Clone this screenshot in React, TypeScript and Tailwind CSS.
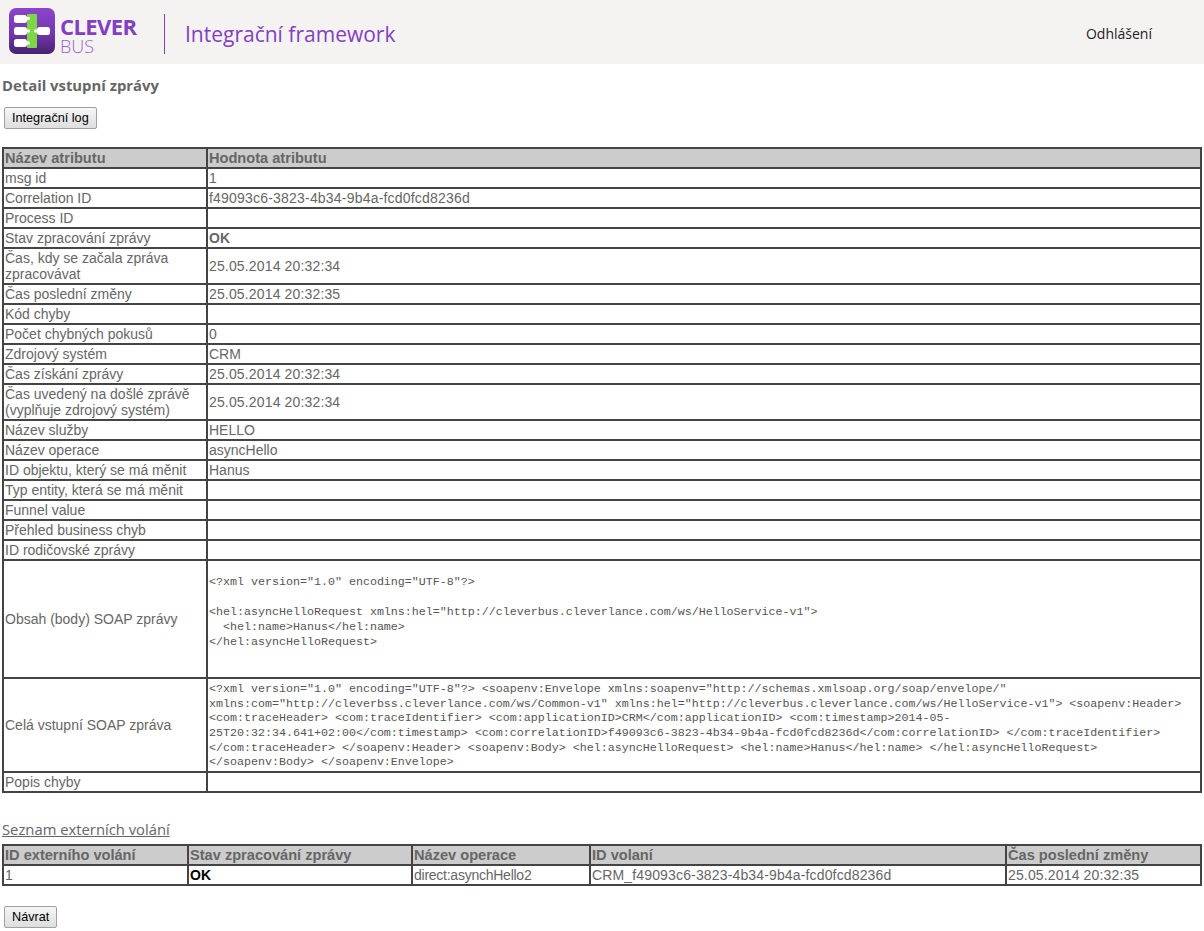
const rows: [string, React.ReactNode][] = [
  ["msg id", "1"],
  ["Correlation ID", <span className="tracking-[0.2px]">f49093c6-3823-4b34-9b4a-fcd0fcd8236d</span>],
  ["Process ID", ""],
  ["Stav zpracování zprávy", <strong className="font-bold">OK</strong>],
  ["Čas, kdy se začala zpráva zpracovávat", <span className="tracking-[0.15px]">25.05.2014 20:32:34</span>],
  ["Čas poslední změny", <span className="tracking-[0.15px]">25.05.2014 20:32:35</span>],
  ["Kód chyby", ""],
  ["Počet chybných pokusů", "0"],
  ["Zdrojový systém", "CRM"],
  ["Čas získání zprávy", <span className="tracking-[0.15px]">25.05.2014 20:32:34</span>],
  ["Čas uvedený na došlé zprávě (vyplňuje zdrojový systém)", <span className="tracking-[0.15px]">25.05.2014 20:32:34</span>],
  ["Název služby", "HELLO"],
  ["Název operace", "asyncHello"],
  ["ID objektu, který se má měnit", "Hanus"],
  ["Typ entity, která se má měnit", ""],
  ["Funnel value", ""],
  ["Přehled business chyb", ""],
  ["ID rodičovské zprávy", ""],
];

const bodyXml = `<?xml version="1.0" encoding="UTF-8"?>

<hel:asyncHelloRequest xmlns:hel="http://cleverbus.cleverlance.com/ws/HelloService-v1">
  <hel:name>Hanus</hel:name>
</hel:asyncHelloRequest>
`;

const fullXml = `<?xml version="1.0" encoding="UTF-8"?> <soapenv:Envelope xmlns:soapenv="http://schemas.xmlsoap.org/soap/envelope/" xmlns:com="http://cleverbss.cleverlance.com/ws/Common-v1" xmlns:hel="http://cleverbus.cleverlance.com/ws/HelloService-v1"> <soapenv:Header> <com:traceHeader> <com:traceIdentifier> <com:applicationID>CRM</com:applicationID> <com:timestamp>2014-05-25T20:32:34.641+02:00</com:timestamp> <com:correlationID>f49093c6-3823-4b34-9b4a-fcd0fcd8236d</com:correlationID> </com:traceIdentifier> </com:traceHeader> </soapenv:Header> <soapenv:Body> <hel:asyncHelloRequest> <hel:name>Hanus</hel:name> </hel:asyncHelloRequest> </soapenv:Body> </soapenv:Envelope>`;

const td = "border-2 border-[#444] px-px py-px align-middle leading-[16px]";
const th = "border-2 border-[#444] bg-[#cccccc] px-px py-px text-left text-[14.6px] font-bold leading-[16px] text-[#666]";
const mono = "font-['Liberation_Mono',monospace] text-[11.67px] text-[#555]";

function Logo() {
  return (
    <svg width="46" height="46" viewBox="0 0 46 46" className="mb-[2px]">
      <defs>
        <linearGradient id="logoBg" x1="0" y1="0" x2="0" y2="1">
          <stop offset="0" stopColor="#8b45cc" />
          <stop offset="0.55" stopColor="#7437ae" />
          <stop offset="1" stopColor="#482270" />
        </linearGradient>
      </defs>
      <rect width="46" height="46" rx="7" fill="url(#logoBg)" />
      <rect x="18" y="6" width="10" height="34" rx="1" fill="#7dd646" />
      <rect x="5" y="7" width="13" height="8" rx="2.5" fill="#fff" />
      <rect x="5" y="19" width="13" height="8" rx="2.5" fill="#fff" />
      <rect x="5" y="31" width="13" height="8" rx="2.5" fill="#fff" />
      <rect x="16" y="9" width="5" height="3" rx="1" fill="#fff" />
      <rect x="16" y="21.5" width="5" height="3" rx="1" fill="#fff" />
      <rect x="16" y="33.5" width="5" height="3" rx="1" fill="#fff" />
      <rect x="28" y="19" width="13" height="8" rx="2.5" fill="#fff" />
      <rect x="25" y="21.5" width="5" height="3" rx="1" fill="#fff" />
    </svg>
  );
}

function PageButton({ label }: { label: string }) {
  return (
    <button className="block h-[22px] rounded-[2px] border border-[#a0a0a0] bg-gradient-to-b from-[#f6f6f6] to-[#dedede] px-[7px] font-['Liberation_Sans',sans-serif] text-[12.67px] text-black">
      {label}
    </button>
  );
}

export default function App() {
  return (
    <div className="min-h-[931px] w-[1204px] bg-white font-['Liberation_Sans',Arial,sans-serif] text-[14px] text-[#666]">
      {/* Header */}
      <div className="flex h-[64px] items-center bg-[#f4f3f2] pl-[9px] font-['Open_Sans',sans-serif]">
        <Logo />
        <div className="ml-[5px] mt-[6px] flex w-[104px] flex-col text-[#8240c0]">
          <span className="text-[22px] font-bold leading-[22px] tracking-[-0.6px]">CLEVER</span>
          <span className="text-[18px] font-light leading-[19px] text-[#9a62d0]">BUS</span>
        </div>
        <div className="mt-[4px] h-[40px] w-px bg-[#8240c0]" />
        <div className="ml-[20px] mt-[5px] text-[21px] text-[#8240c0]">Integrační framework</div>
        <div className="ml-auto mr-[52px] mt-[2px] text-[14px] text-[#222]">Odhlášení</div>
      </div>

      <div className="px-[3px]">
        <h1 className="ml-[-1px] mt-[11px] font-['Open_Sans',sans-serif] text-[14.85px] font-bold leading-[20px] text-[#666]">
          Detail vstupní zprávy
        </h1>
        <div className="ml-px mt-[12px]">
          <PageButton label="Integrační log" />
        </div>

        <table className="ml-[-1px] mt-[18px] w-[1200px] table-fixed border-collapse border-2 border-[#444]">
          <colgroup>
            <col className="w-[204px]" />
            <col />
          </colgroup>
          <thead>
            <tr>
              <th className={th}>Název atributu</th>
              <th className={th}>Hodnota atributu</th>
            </tr>
          </thead>
          <tbody>
            {rows.map(([name, value]) => (
              <tr key={name}>
                <td className={td}>{name}</td>
                <td className={td}>{value}</td>
              </tr>
            ))}
            <tr>
              <td className={td}>Obsah (body) SOAP zprávy</td>
              <td className={td}>
                <pre className={`${mono} mb-[11px] mt-[13px] leading-[15px]`}>{bodyXml + "\n"}</pre>
              </td>
            </tr>
            <tr>
              <td className={td}>Celá vstupní SOAP zpráva</td>
              <td className={td}>
                <div className={`${mono} pt-[2px] leading-[14.67px]`}>{fullXml}</div>
              </td>
            </tr>
            <tr>
              <td className={td}>Popis chyby</td>
              <td className={td}></td>
            </tr>
          </tbody>
        </table>

        <h2 className="ml-[-1px] mt-[26px] font-['Open_Sans',sans-serif] text-[14.8px] font-normal leading-[20px] text-[#666] underline">
          Seznam externích volání
        </h2>

        <table className="ml-[-1px] mt-[5px] w-[1200px] table-fixed border-collapse border-2 border-[#444]">
          <colgroup>
            <col className="w-[185px]" />
            <col className="w-[224px]" />
            <col className="w-[178px]" />
            <col className="w-[416px]" />
            <col />
          </colgroup>
          <thead>
            <tr>
              <th className={th}>ID externího volání</th>
              <th className={th}>Stav zpracování zprávy</th>
              <th className={th}>Název operace</th>
              <th className={th}>ID volaní</th>
              <th className={th}>Čas poslední změny</th>
            </tr>
          </thead>
          <tbody>
            <tr>
              <td className={td}>1</td>
              <td className={`${td} font-bold text-black`}>OK</td>
              <td className={`${td} tracking-[-0.25px]`}>direct:asynchHello2</td>
              <td className={`${td} tracking-[0.15px]`}>CRM_f49093c6-3823-4b34-9b4a-fcd0fcd8236d</td>
              <td className={`${td} tracking-[0.15px]`}>25.05.2014 20:32:35</td>
            </tr>
          </tbody>
        </table>

        <div className="ml-px mt-[20px]">
          <PageButton label="Návrat" />
        </div>
      </div>
    </div>
  );
}
